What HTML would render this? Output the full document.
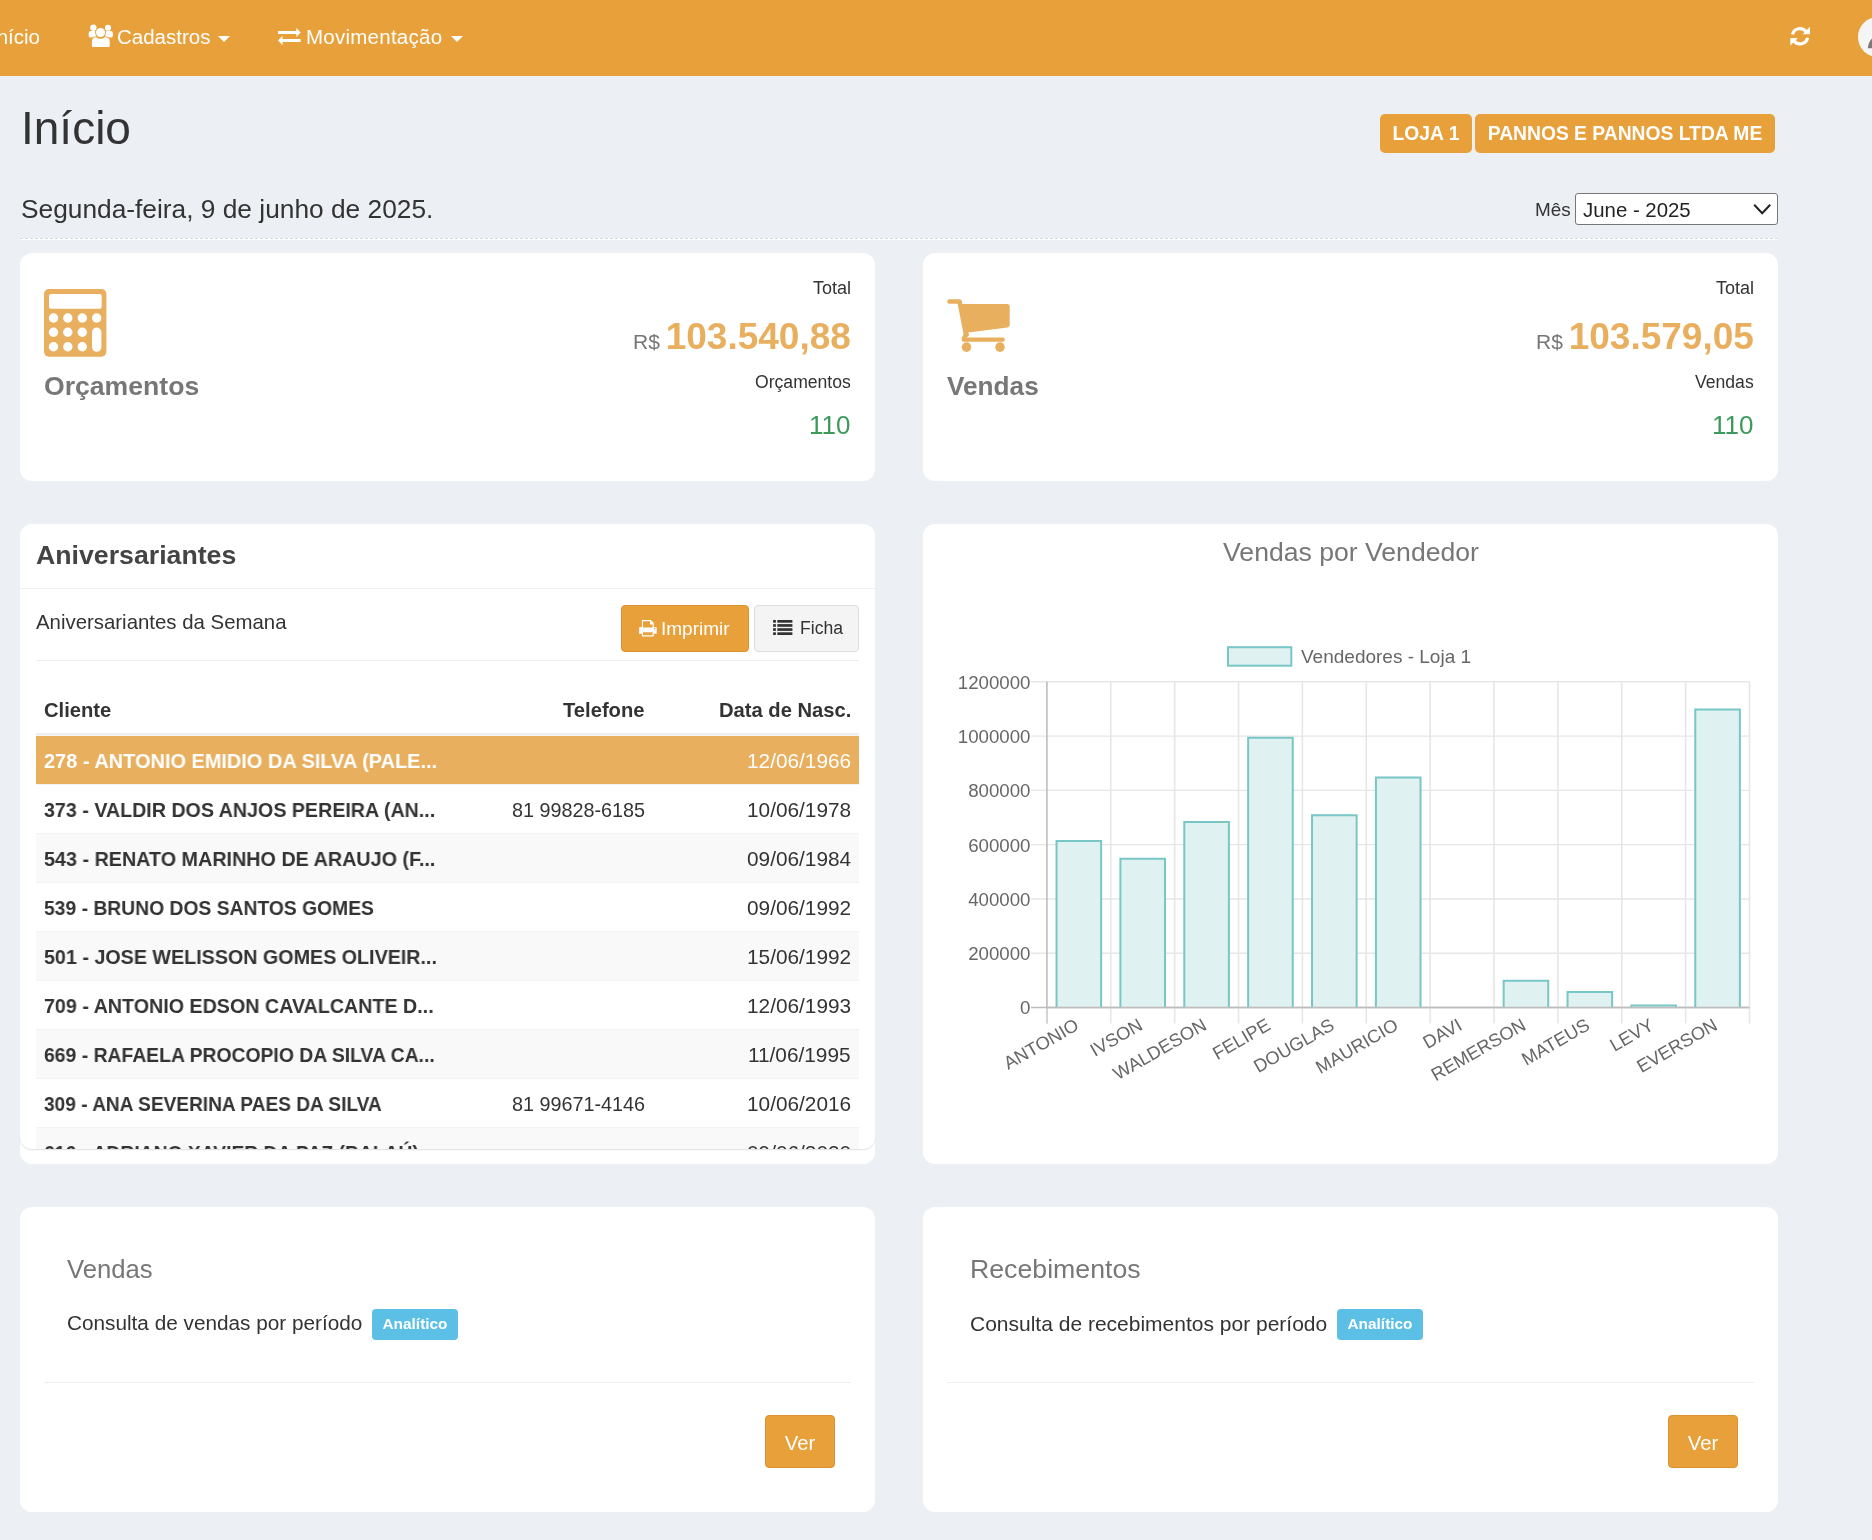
<!DOCTYPE html>
<html><head><meta charset="utf-8"><title>Início</title>
<style>
html,body{margin:0;padding:0;width:1872px;height:1540px;overflow:hidden;background:#ecf0f5;font-family:"Liberation Sans", sans-serif;}
.t{position:absolute;white-space:nowrap;font-family:"Liberation Sans", sans-serif;will-change:transform;}
svg{will-change:transform;}
</style></head><body>
<div style="position:absolute;left:0px;top:0px;width:1872px;height:76px;background:#e8a03b;"></div>
<div class="t" style="right:1832px;text-align:right;top:26.5px;font-size:20.5px;line-height:20.5px;font-weight:normal;color:#fff;">Início</div>
<svg style="position:absolute;left:84px;top:20px" width="32" height="32" viewBox="84 20 32 32">
<g fill="#fff">
<circle cx="93.4" cy="27.75" r="3.15"/><circle cx="108" cy="27.75" r="3.1"/>
<rect x="88.7" y="31.1" width="8" height="6.5" rx="2.2"/>
<rect x="104.8" y="31.1" width="8.1" height="6.5" rx="2.2"/>
</g>
<g fill="#e8a03b">
<circle cx="100.55" cy="32.55" r="5.4"/>
<path d="M91 48 V41.5 Q91 36.4 96 36.4 L105.1 36.4 Q110.6 36.4 110.6 41.5 V48 Z"/>
</g>
<g fill="#fff">
<circle cx="100.55" cy="32.55" r="4.5"/>
<path d="M91.9 46 V41.6 Q91.9 37.2 96.2 37.2 Q100.55 40.4 104.9 37.2 Q109.7 37.2 109.7 41.6 V46 Q109.7 47.1 108.6 47.1 H93 Q91.9 47.1 91.9 46 Z"/>
</g></svg>
<div class="t" style="left:117px;top:26.5px;font-size:20.5px;line-height:20.5px;font-weight:normal;color:#fff;">Cadastros</div>
<div style="position:absolute;left:218px;top:36px;width:12px;height:6px;width:0;height:0;border-left:6px solid transparent;border-right:6px solid transparent;border-top:6px solid #fff;"></div>
<svg style="position:absolute;left:276px;top:26px" width="28" height="22" viewBox="276 26 28 22">
<g fill="#fff">
<path d="M278.05 31.1 H296.3 V28.1 L300.7 32.6 L296.3 37 V34.1 H278.05 Z"/>
<path d="M300.7 39 H282.5 V35.8 L278.05 40.6 L282.5 45.2 V42.1 H300.7 Z"/>
</g></svg>
<div class="t" style="left:306px;top:26.5px;font-size:20.5px;line-height:20.5px;font-weight:normal;color:#fff;letter-spacing:0.25px;">Movimentação</div>
<div style="position:absolute;left:451px;top:36px;width:12px;height:6px;width:0;height:0;border-left:6px solid transparent;border-right:6px solid transparent;border-top:6px solid #fff;"></div>
<svg style="position:absolute;left:1788px;top:24px" width="24" height="24" viewBox="1788 24 24 24">
<g fill="none" stroke="#fff" stroke-width="3.2">
<path d="M1792.6 34.5 A7.6 7.6 0 0 1 1806 31.5"/>
<path d="M1807.6 37.8 A7.6 7.6 0 0 1 1794 40.8"/>
</g>
<g fill="#fff">
<path d="M1810 26.8 L1810 34.3 L1802.6 34.3 Z"/>
<path d="M1790.4 45.6 L1790.4 38.0 L1797.8 38.0 Z"/>
</g></svg>
<div style="position:absolute;left:1857.8px;top:16.9px;width:40.2px;height:40.2px;border-radius:50%;background:#f5f5f5;"></div>
<svg style="position:absolute;left:1860px;top:30px" width="12" height="20" viewBox="1860 30 12 20"><path d="M1867.8 48.2 Q1868.6 41.5 1872 38.4 L1872 48.2 Z" fill="#7f7879"/></svg>
<div class="t" style="left:20.5px;top:104.8px;font-size:46px;line-height:46px;font-weight:normal;color:#333;">Início</div>
<div style="position:absolute;left:1380px;top:114px;width:92px;height:39px;background:#e8a03b;border-radius:5px;"></div>
<div class="t" style="left:926px;width:1000px;text-align:center;top:124.2px;font-size:19.3px;line-height:19.3px;font-weight:bold;color:#fff;">LOJA 1</div>
<div style="position:absolute;left:1475px;top:114px;width:300px;height:39px;background:#e8a03b;border-radius:5px;"></div>
<div class="t" style="left:1125px;width:1000px;text-align:center;top:124.2px;font-size:19.3px;line-height:19.3px;font-weight:bold;color:#fff;">PANNOS E PANNOS LTDA ME</div>
<div class="t" style="left:20.5px;top:196.1px;font-size:26.3px;line-height:26.3px;font-weight:normal;color:#333;">Segunda-feira, 9 de junho de 2025.</div>
<div class="t" style="left:1535.3px;top:200.9px;font-size:18.9px;line-height:18.9px;font-weight:normal;color:#333;">Mês</div>
<div style="position:absolute;left:1575px;top:193px;width:203px;height:32px;box-sizing:border-box;background:#fff;border:1px solid #767676;border-radius:3px;"></div>
<div class="t" style="left:1583px;top:199.7px;font-size:20.4px;line-height:20.4px;font-weight:normal;color:#222;">June - 2025</div>
<svg style="position:absolute;left:1750px;top:200px" width="24" height="18" viewBox="1750 200 24 18">
<path d="M1754.2 204.8 L1762.2 213.2 L1770.2 204.8" fill="none" stroke="#222" stroke-width="2"/></svg>
<div style="position:absolute;left:20px;top:238px;width:1758px;height:1px;box-sizing:content-box;height:1px;background:#fff;border-top:1px dashed #d5d9df;"></div>
<div style="position:absolute;left:20px;top:253px;width:855px;height:228px;background:#fff;border-radius:12px;"></div>
<div style="position:absolute;left:923px;top:253px;width:855px;height:228px;background:#fff;border-radius:12px;"></div>
<svg style="position:absolute;left:40px;top:285px" width="70" height="76" viewBox="40 285 70 76">
<rect x="44" y="289" width="62.4" height="67.8" rx="5" fill="#e8af5f"/>
<rect x="49" y="293.9" width="52.7" height="14.8" rx="2.2" fill="#fff"/>
<g fill="#fff">
<circle cx="53.5" cy="318" r="4.7"/><circle cx="67.8" cy="318" r="4.7"/><circle cx="82.3" cy="318" r="4.7"/><circle cx="96.7" cy="318" r="4.7"/>
<circle cx="53.5" cy="332.3" r="4.7"/><circle cx="67.8" cy="332.3" r="4.7"/><circle cx="82.3" cy="332.3" r="4.7"/>
<circle cx="53.5" cy="346.7" r="4.7"/><circle cx="67.8" cy="346.7" r="4.7"/><circle cx="82.3" cy="346.7" r="4.7"/>
<rect x="92" y="327.6" width="9.4" height="24.2" rx="4.7"/>
</g></svg>
<div class="t" style="left:44px;top:372.7px;font-size:26.6px;line-height:26.6px;font-weight:bold;color:#777;">Orçamentos</div>
<div class="t" style="right:1021px;text-align:right;top:279.2px;font-size:18px;line-height:18px;font-weight:normal;color:#333;">Total</div>
<div class="t" style="right:1021px;text-align:right;top:318.1px;font-size:37px;line-height:37px;font-weight:bold;color:#e8af5f;"><span style="font-size:21px;font-weight:normal;color:#777;margin-right:0px">R$ </span>103.540,88</div>
<div class="t" style="right:1021px;text-align:right;top:374.0px;font-size:17.6px;line-height:17.6px;font-weight:normal;color:#333;">Orçamentos</div>
<div class="t" style="right:1022px;text-align:right;top:412.1px;font-size:26px;line-height:26px;font-weight:normal;color:#3d9a5b;">110</div>
<svg style="position:absolute;left:943px;top:295px" width="72" height="62" viewBox="943 295 72 62">
<g fill="#e8af5f">
<path d="M949.4 299.2 L959.5 299.2 Q961.5 299.2 961.9 301.2 L962.3 304 L1007.2 304 Q1009.7 304 1009.7 306.5 L1009.7 325 Q1009.7 327.2 1007.5 327.5 L968.3 332.4 L969.2 335 L966.5 338 L961.5 338 L963.6 334.5 L957.7 304 Q957.4 303.8 957 303.8 L949.4 303.8 Q947.2 303.8 947.2 301.5 Q947.2 299.2 949.4 299.2Z"/>
<path d="M963.8 337.4 L1002.6 337.4 Q1004.8 337.4 1004.8 339.6 Q1004.8 341.8 1002.6 341.8 L963.8 341.8 Q961.6 341.8 961.6 339.6 Q961.6 337.4 963.8 337.4Z"/>
<circle cx="966.5" cy="347.1" r="4.8"/><circle cx="1000" cy="347.1" r="4.8"/>
</g></svg>
<div class="t" style="left:947px;top:373.0px;font-size:26.2px;line-height:26.2px;font-weight:bold;color:#777;">Vendas</div>
<div class="t" style="right:118px;text-align:right;top:279.2px;font-size:18px;line-height:18px;font-weight:normal;color:#333;">Total</div>
<div class="t" style="right:118px;text-align:right;top:318.1px;font-size:37px;line-height:37px;font-weight:bold;color:#e8af5f;"><span style="font-size:21px;font-weight:normal;color:#777;margin-right:0px">R$ </span>103.579,05</div>
<div class="t" style="right:118px;text-align:right;top:374.0px;font-size:17.6px;line-height:17.6px;font-weight:normal;color:#333;">Vendas</div>
<div class="t" style="right:119px;text-align:right;top:412.1px;font-size:26px;line-height:26px;font-weight:normal;color:#3d9a5b;">110</div>
<div style="position:absolute;left:20px;top:524px;width:855px;height:640px;background:#fff;border-radius:12px;"></div>
<div class="t" style="left:35.5px;top:541.5px;font-size:26.7px;line-height:26.7px;font-weight:bold;color:#444;">Aniversariantes</div>
<div style="position:absolute;left:20px;top:588px;width:855px;height:1px;background:#f0f0f0;"></div>
<div class="t" style="left:36px;top:612.0px;font-size:20.4px;line-height:20.4px;font-weight:normal;color:#333;">Aniversariantes da Semana</div>
<div style="position:absolute;left:621px;top:605px;width:128px;height:47px;box-sizing:border-box;background:#e8a03b;border:1px solid #dd9230;border-radius:4px;"></div>
<svg style="position:absolute;left:636px;top:618px" width="24" height="21" viewBox="636 618 24 21">
<g fill="#fff">
<path fill-rule="evenodd" d="M641.9 620 L650.8 620 L653.8 623 L653.8 627 L655.7 627 Q656.7 627 656.7 628 L656.7 633.8 L653.8 633.8 L653.8 636.4 L641.9 636.4 L641.9 633.8 L639.1 633.8 L639.1 628 Q639.1 627 640.1 627 L641.9 627 Z M643 621.2 L643 627.6 L652.6 627.6 L652.6 624.4 L650 624.4 L650 621.2 Z M643 632.3 L643 635.2 L652.6 635.2 L652.6 632.3 Z"/>
</g><circle cx="654.6" cy="628.7" r="0.7" fill="#e8a03b"/></svg>
<div class="t" style="left:661px;top:618.7px;font-size:19px;line-height:19px;font-weight:normal;color:#fff;">Imprimir</div>
<div style="position:absolute;left:754px;top:605px;width:105px;height:47px;box-sizing:border-box;background:#f4f4f4;border:1px solid #ddd;border-radius:4px;"></div>
<svg style="position:absolute;left:770px;top:618px" width="26" height="20" viewBox="770 618 26 20">
<g fill="#333">
<rect x="773.1" y="620" width="2.8" height="2.7"/><rect x="777.3" y="620" width="15.1" height="2.7"/>
<rect x="773.1" y="624.1" width="2.8" height="2.7"/><rect x="777.3" y="624.1" width="15.1" height="2.7"/>
<rect x="773.1" y="628.2" width="2.8" height="2.7"/><rect x="777.3" y="628.2" width="15.1" height="2.7"/>
<rect x="773.1" y="632.3" width="2.8" height="2.7"/><rect x="777.3" y="632.3" width="15.1" height="2.7"/>
</g></svg>
<div class="t" style="left:800px;top:619.9px;font-size:17.6px;line-height:17.6px;font-weight:normal;color:#333;">Ficha</div>
<div style="position:absolute;left:36px;top:660px;width:823px;height:1px;background:#eee;"></div>
<div class="t" style="left:44px;top:699.9px;font-size:20.2px;line-height:20.2px;font-weight:bold;color:#333;">Cliente</div>
<div class="t" style="right:1227px;text-align:right;top:699.9px;font-size:20.2px;line-height:20.2px;font-weight:bold;color:#333;">Telefone</div>
<div class="t" style="right:1021px;text-align:right;top:699.9px;font-size:20.2px;line-height:20.2px;font-weight:bold;color:#333;">Data de Nasc.</div>
<div style="position:absolute;left:36px;top:733px;width:823px;height:2px;background:#eeeeee;"></div>
<div style="position:absolute;left:36px;top:735px;width:823px;height:1px;background:#f4f6f9;"></div>
<div style="position:absolute;left:20px;top:736px;width:855px;height:413px;overflow:hidden;border-radius:0 0 12px 12px;">
<div style="position:absolute;left:16px;top:0px;width:823px;height:48px;background:#e8af5f;"></div>
<div class="t" style="left:24px;top:14.9px;font-size:20px;line-height:20px;font-weight:bold;color:#fff;transform:scaleX(0.9975);transform-origin:0 0">278 - ANTONIO EMIDIO DA SILVA (PALE...</div>
<div class="t" style="right:24px;text-align:right;top:14.9px;font-size:20.8px;line-height:20px;color:#fff">12/06/1966</div>
<div style="position:absolute;left:16px;top:49px;width:823px;height:48px;background:#fff;"></div>
<div style="position:absolute;left:16px;top:48px;width:823px;height:1px;background:#f3f3f3;"></div>
<div class="t" style="left:24px;top:63.9px;font-size:20px;line-height:20px;font-weight:bold;color:#333;transform:scaleX(0.9824);transform-origin:0 0">373 - VALDIR DOS ANJOS PEREIRA (AN...</div>
<div class="t" style="right:230px;text-align:right;top:63.9px;font-size:19.8px;line-height:20px;color:#333">81 99828-6185</div>
<div class="t" style="right:24px;text-align:right;top:63.9px;font-size:20.8px;line-height:20px;color:#333">10/06/1978</div>
<div style="position:absolute;left:16px;top:98px;width:823px;height:48px;background:#f9f9f9;"></div>
<div style="position:absolute;left:16px;top:97px;width:823px;height:1px;background:#f3f3f3;"></div>
<div class="t" style="left:24px;top:112.9px;font-size:20px;line-height:20px;font-weight:bold;color:#333;transform:scaleX(0.9874);transform-origin:0 0">543 - RENATO MARINHO DE ARAUJO (F...</div>
<div class="t" style="right:24px;text-align:right;top:112.9px;font-size:20.8px;line-height:20px;color:#333">09/06/1984</div>
<div style="position:absolute;left:16px;top:147px;width:823px;height:48px;background:#fff;"></div>
<div style="position:absolute;left:16px;top:146px;width:823px;height:1px;background:#f3f3f3;"></div>
<div class="t" style="left:24px;top:161.9px;font-size:20px;line-height:20px;font-weight:bold;color:#333;transform:scaleX(0.9649);transform-origin:0 0">539 - BRUNO DOS SANTOS GOMES</div>
<div class="t" style="right:24px;text-align:right;top:161.9px;font-size:20.8px;line-height:20px;color:#333">09/06/1992</div>
<div style="position:absolute;left:16px;top:196px;width:823px;height:48px;background:#f9f9f9;"></div>
<div style="position:absolute;left:16px;top:195px;width:823px;height:1px;background:#f3f3f3;"></div>
<div class="t" style="left:24px;top:210.9px;font-size:20px;line-height:20px;font-weight:bold;color:#333;transform:scaleX(0.9849);transform-origin:0 0">501 - JOSE WELISSON GOMES OLIVEIR...</div>
<div class="t" style="right:24px;text-align:right;top:210.9px;font-size:20.8px;line-height:20px;color:#333">15/06/1992</div>
<div style="position:absolute;left:16px;top:245px;width:823px;height:48px;background:#fff;"></div>
<div style="position:absolute;left:16px;top:244px;width:823px;height:1px;background:#f3f3f3;"></div>
<div class="t" style="left:24px;top:259.9px;font-size:20px;line-height:20px;font-weight:bold;color:#333;transform:scaleX(0.984);transform-origin:0 0">709 - ANTONIO EDSON CAVALCANTE D...</div>
<div class="t" style="right:24px;text-align:right;top:259.9px;font-size:20.8px;line-height:20px;color:#333">12/06/1993</div>
<div style="position:absolute;left:16px;top:294px;width:823px;height:48px;background:#f9f9f9;"></div>
<div style="position:absolute;left:16px;top:293px;width:823px;height:1px;background:#f3f3f3;"></div>
<div class="t" style="left:24px;top:308.9px;font-size:20px;line-height:20px;font-weight:bold;color:#333;transform:scaleX(0.9677);transform-origin:0 0">669 - RAFAELA PROCOPIO DA SILVA CA...</div>
<div class="t" style="right:24px;text-align:right;top:308.9px;font-size:20.8px;line-height:20px;color:#333">11/06/1995</div>
<div style="position:absolute;left:16px;top:343px;width:823px;height:48px;background:#fff;"></div>
<div style="position:absolute;left:16px;top:342px;width:823px;height:1px;background:#f3f3f3;"></div>
<div class="t" style="left:24px;top:357.9px;font-size:20px;line-height:20px;font-weight:bold;color:#333;transform:scaleX(0.9548);transform-origin:0 0">309 - ANA SEVERINA PAES DA SILVA</div>
<div class="t" style="right:230px;text-align:right;top:357.9px;font-size:19.8px;line-height:20px;color:#333">81 99671-4146</div>
<div class="t" style="right:24px;text-align:right;top:357.9px;font-size:20.8px;line-height:20px;color:#333">10/06/2016</div>
<div style="position:absolute;left:16px;top:392px;width:823px;height:48px;background:#f9f9f9;"></div>
<div style="position:absolute;left:16px;top:391px;width:823px;height:1px;background:#f3f3f3;"></div>
<div class="t" style="left:24px;top:406.9px;font-size:20px;line-height:20px;font-weight:bold;color:#333;transform:scaleX(0.9638);transform-origin:0 0">616 - ADRIANO XAVIER DA PAZ (BALAÚ)</div>
<div class="t" style="right:24px;text-align:right;top:406.9px;font-size:20.8px;line-height:20px;color:#333">09/06/2020</div>
</div>
<div style="position:absolute;left:20px;top:1136px;width:855px;height:13px;border-radius:0 0 12px 12px;box-shadow:0 1px 1.5px rgba(0,0,0,0.13);clip-path:inset(0 -4px -4px -4px);"></div>
<div style="position:absolute;left:923px;top:524px;width:855px;height:640px;background:#fff;border-radius:12px;"></div>
<div class="t" style="left:850.5px;width:1000px;text-align:center;top:539.4px;font-size:26.6px;line-height:26.6px;font-weight:normal;color:#777;">Vendas por Vendedor</div>
<svg style="position:absolute;left:923px;top:600px" width="855" height="520" viewBox="923 600 855 520">
<rect x="1228" y="647.2" width="63.3" height="18.5" fill="#e0f1f1" stroke="#78c6c6" stroke-width="2"/>
<text x="1301" y="662.7" font-family='"Liberation Sans", sans-serif' font-size="19" fill="#666">Vendedores - Loja 1</text>
<line x1="1031" y1="1007.50" x2="1749.5" y2="1007.50" stroke="#bdbdbd" stroke-width="1.4"/>
<text x="1030.5" y="1014.40" text-anchor="end" font-family='"Liberation Sans", sans-serif' font-size="18.7" fill="#666">0</text>
<line x1="1031" y1="953.22" x2="1749.5" y2="953.22" stroke="#e6e6e6" stroke-width="1.4"/>
<text x="1030.5" y="960.12" text-anchor="end" font-family='"Liberation Sans", sans-serif' font-size="18.7" fill="#666">200000</text>
<line x1="1031" y1="898.93" x2="1749.5" y2="898.93" stroke="#e6e6e6" stroke-width="1.4"/>
<text x="1030.5" y="905.83" text-anchor="end" font-family='"Liberation Sans", sans-serif' font-size="18.7" fill="#666">400000</text>
<line x1="1031" y1="844.65" x2="1749.5" y2="844.65" stroke="#e6e6e6" stroke-width="1.4"/>
<text x="1030.5" y="851.55" text-anchor="end" font-family='"Liberation Sans", sans-serif' font-size="18.7" fill="#666">600000</text>
<line x1="1031" y1="790.37" x2="1749.5" y2="790.37" stroke="#e6e6e6" stroke-width="1.4"/>
<text x="1030.5" y="797.27" text-anchor="end" font-family='"Liberation Sans", sans-serif' font-size="18.7" fill="#666">800000</text>
<line x1="1031" y1="736.08" x2="1749.5" y2="736.08" stroke="#e6e6e6" stroke-width="1.4"/>
<text x="1030.5" y="742.98" text-anchor="end" font-family='"Liberation Sans", sans-serif' font-size="18.7" fill="#666">1000000</text>
<line x1="1031" y1="681.80" x2="1749.5" y2="681.80" stroke="#e6e6e6" stroke-width="1.4"/>
<text x="1030.5" y="688.70" text-anchor="end" font-family='"Liberation Sans", sans-serif' font-size="18.7" fill="#666">1200000</text>
<line x1="1046.90" y1="681.8" x2="1046.90" y2="1023.5" stroke="#bdbdbd" stroke-width="1.6"/>
<line x1="1110.77" y1="681.8" x2="1110.77" y2="1023.5" stroke="#e6e6e6" stroke-width="1.6"/>
<line x1="1174.65" y1="681.8" x2="1174.65" y2="1023.5" stroke="#e6e6e6" stroke-width="1.6"/>
<line x1="1238.52" y1="681.8" x2="1238.52" y2="1023.5" stroke="#e6e6e6" stroke-width="1.6"/>
<line x1="1302.39" y1="681.8" x2="1302.39" y2="1023.5" stroke="#e6e6e6" stroke-width="1.6"/>
<line x1="1366.26" y1="681.8" x2="1366.26" y2="1023.5" stroke="#e6e6e6" stroke-width="1.6"/>
<line x1="1430.14" y1="681.8" x2="1430.14" y2="1023.5" stroke="#e6e6e6" stroke-width="1.6"/>
<line x1="1494.01" y1="681.8" x2="1494.01" y2="1023.5" stroke="#e6e6e6" stroke-width="1.6"/>
<line x1="1557.88" y1="681.8" x2="1557.88" y2="1023.5" stroke="#e6e6e6" stroke-width="1.6"/>
<line x1="1621.75" y1="681.8" x2="1621.75" y2="1023.5" stroke="#e6e6e6" stroke-width="1.6"/>
<line x1="1685.63" y1="681.8" x2="1685.63" y2="1023.5" stroke="#e6e6e6" stroke-width="1.6"/>
<line x1="1749.50" y1="681.8" x2="1749.50" y2="1023.5" stroke="#e6e6e6" stroke-width="1.6"/>
<line x1="1046.90" y1="1008.5" x2="1046.90" y2="1023.5" stroke="#d6d6d6" stroke-width="1.6"/>
<rect x="1056.54" y="841.12" width="44.6" height="166.38" fill="#e0f1f1"/>
<path d="M1056.54 1007.50 V841.12 H1101.14 V1007.50" fill="none" stroke="#78c6c6" stroke-width="2"/>
<rect x="1120.41" y="858.63" width="44.6" height="148.87" fill="#e0f1f1"/>
<path d="M1120.41 1007.50 V858.63 H1165.01 V1007.50" fill="none" stroke="#78c6c6" stroke-width="2"/>
<rect x="1184.28" y="821.96" width="44.6" height="185.54" fill="#e0f1f1"/>
<path d="M1184.28 1007.50 V821.96 H1228.88 V1007.50" fill="none" stroke="#78c6c6" stroke-width="2"/>
<rect x="1248.15" y="737.63" width="44.6" height="269.87" fill="#e0f1f1"/>
<path d="M1248.15 1007.50 V737.63 H1292.75 V1007.50" fill="none" stroke="#78c6c6" stroke-width="2"/>
<rect x="1312.03" y="815.17" width="44.6" height="192.33" fill="#e0f1f1"/>
<path d="M1312.03 1007.50 V815.17 H1356.63 V1007.50" fill="none" stroke="#78c6c6" stroke-width="2"/>
<rect x="1375.90" y="777.61" width="44.6" height="229.89" fill="#e0f1f1"/>
<path d="M1375.90 1007.50 V777.61 H1420.50 V1007.50" fill="none" stroke="#78c6c6" stroke-width="2"/>
<rect x="1503.65" y="980.68" width="44.6" height="26.82" fill="#e0f1f1"/>
<path d="M1503.65 1007.50 V980.68 H1548.25 V1007.50" fill="none" stroke="#78c6c6" stroke-width="2"/>
<rect x="1567.52" y="992.00" width="44.6" height="15.50" fill="#e0f1f1"/>
<path d="M1567.52 1007.50 V992.00 H1612.12 V1007.50" fill="none" stroke="#78c6c6" stroke-width="2"/>
<rect x="1631.39" y="1005.49" width="44.6" height="2.01" fill="#e0f1f1"/>
<path d="M1631.39 1007.50 V1005.49 H1675.99 V1007.50" fill="none" stroke="#78c6c6" stroke-width="2"/>
<rect x="1695.26" y="709.54" width="44.6" height="297.96" fill="#e0f1f1"/>
<path d="M1695.26 1007.50 V709.54 H1739.86 V1007.50" fill="none" stroke="#78c6c6" stroke-width="2"/>
<line x1="1046.9" y1="1007.50" x2="1749.5" y2="1007.50" stroke="#bdbdbd" stroke-width="1.6"/>
<text transform="translate(1076.84,1023) rotate(-30)" text-anchor="end" dy="6.5" font-family='"Liberation Sans", sans-serif' font-size="18.3" fill="#666">ANTONIO</text>
<text transform="translate(1140.71,1023) rotate(-30)" text-anchor="end" dy="6.5" font-family='"Liberation Sans", sans-serif' font-size="18.3" fill="#666">IVSON</text>
<text transform="translate(1204.58,1023) rotate(-30)" text-anchor="end" dy="6.5" font-family='"Liberation Sans", sans-serif' font-size="18.3" fill="#666">WALDESON</text>
<text transform="translate(1268.45,1023) rotate(-30)" text-anchor="end" dy="6.5" font-family='"Liberation Sans", sans-serif' font-size="18.3" fill="#666">FELIPE</text>
<text transform="translate(1332.33,1023) rotate(-30)" text-anchor="end" dy="6.5" font-family='"Liberation Sans", sans-serif' font-size="18.3" fill="#666">DOUGLAS</text>
<text transform="translate(1396.20,1023) rotate(-30)" text-anchor="end" dy="6.5" font-family='"Liberation Sans", sans-serif' font-size="18.3" fill="#666">MAURICIO</text>
<text transform="translate(1460.07,1023) rotate(-30)" text-anchor="end" dy="6.5" font-family='"Liberation Sans", sans-serif' font-size="18.3" fill="#666">DAVI</text>
<text transform="translate(1523.95,1023) rotate(-30)" text-anchor="end" dy="6.5" font-family='"Liberation Sans", sans-serif' font-size="18.3" fill="#666">REMERSON</text>
<text transform="translate(1587.82,1023) rotate(-30)" text-anchor="end" dy="6.5" font-family='"Liberation Sans", sans-serif' font-size="18.3" fill="#666">MATEUS</text>
<text transform="translate(1651.69,1023) rotate(-30)" text-anchor="end" dy="6.5" font-family='"Liberation Sans", sans-serif' font-size="18.3" fill="#666">LEVY</text>
<text transform="translate(1715.56,1023) rotate(-30)" text-anchor="end" dy="6.5" font-family='"Liberation Sans", sans-serif' font-size="18.3" fill="#666">EVERSON</text>
</svg>
<div style="position:absolute;left:20px;top:1207px;width:855px;height:305px;background:#fff;border-radius:12px;"></div>
<div class="t" style="left:66.5px;top:1257.2px;font-size:25.7px;line-height:25.7px;font-weight:normal;color:#777;">Vendas</div>
<div class="t" style="left:67px;top:1313.1px;font-size:20.75px;line-height:20.75px;font-weight:normal;color:#333;">Consulta de vendas por período</div>
<div style="position:absolute;left:372px;top:1309.3px;width:86px;height:30.700000000000045px;background:#5bbfe6;border-radius:4px;"></div>
<div class="t" style="left:-85px;width:1000px;text-align:center;top:1316.4px;font-size:15.4px;line-height:15.4px;font-weight:bold;color:#fff;">Analítico</div>
<div style="position:absolute;left:44px;top:1382px;width:807px;height:1px;background:#eee;"></div>
<div style="position:absolute;left:765px;top:1415px;width:70px;height:53px;box-sizing:border-box;background:#e8a03b;border:1px solid #dd9230;border-radius:4px;"></div>
<div class="t" style="left:300px;width:1000px;text-align:center;top:1432.9px;font-size:20.3px;line-height:20.3px;font-weight:normal;color:#fff;">Ver</div>
<div style="position:absolute;left:923px;top:1207px;width:855px;height:305px;background:#fff;border-radius:12px;"></div>
<div class="t" style="left:969.5px;top:1256.4px;font-size:26.7px;line-height:26.7px;font-weight:normal;color:#777;">Recebimentos</div>
<div class="t" style="left:970px;top:1312.9px;font-size:21px;line-height:21px;font-weight:normal;color:#333;">Consulta de recebimentos por período</div>
<div style="position:absolute;left:1337px;top:1309.3px;width:86px;height:30.700000000000045px;background:#5bbfe6;border-radius:4px;"></div>
<div class="t" style="left:880px;width:1000px;text-align:center;top:1316.4px;font-size:15.4px;line-height:15.4px;font-weight:bold;color:#fff;">Analítico</div>
<div style="position:absolute;left:947px;top:1382px;width:807px;height:1px;background:#eee;"></div>
<div style="position:absolute;left:1668px;top:1415px;width:70px;height:53px;box-sizing:border-box;background:#e8a03b;border:1px solid #dd9230;border-radius:4px;"></div>
<div class="t" style="left:1203px;width:1000px;text-align:center;top:1432.9px;font-size:20.3px;line-height:20.3px;font-weight:normal;color:#fff;">Ver</div>
</body></html>
